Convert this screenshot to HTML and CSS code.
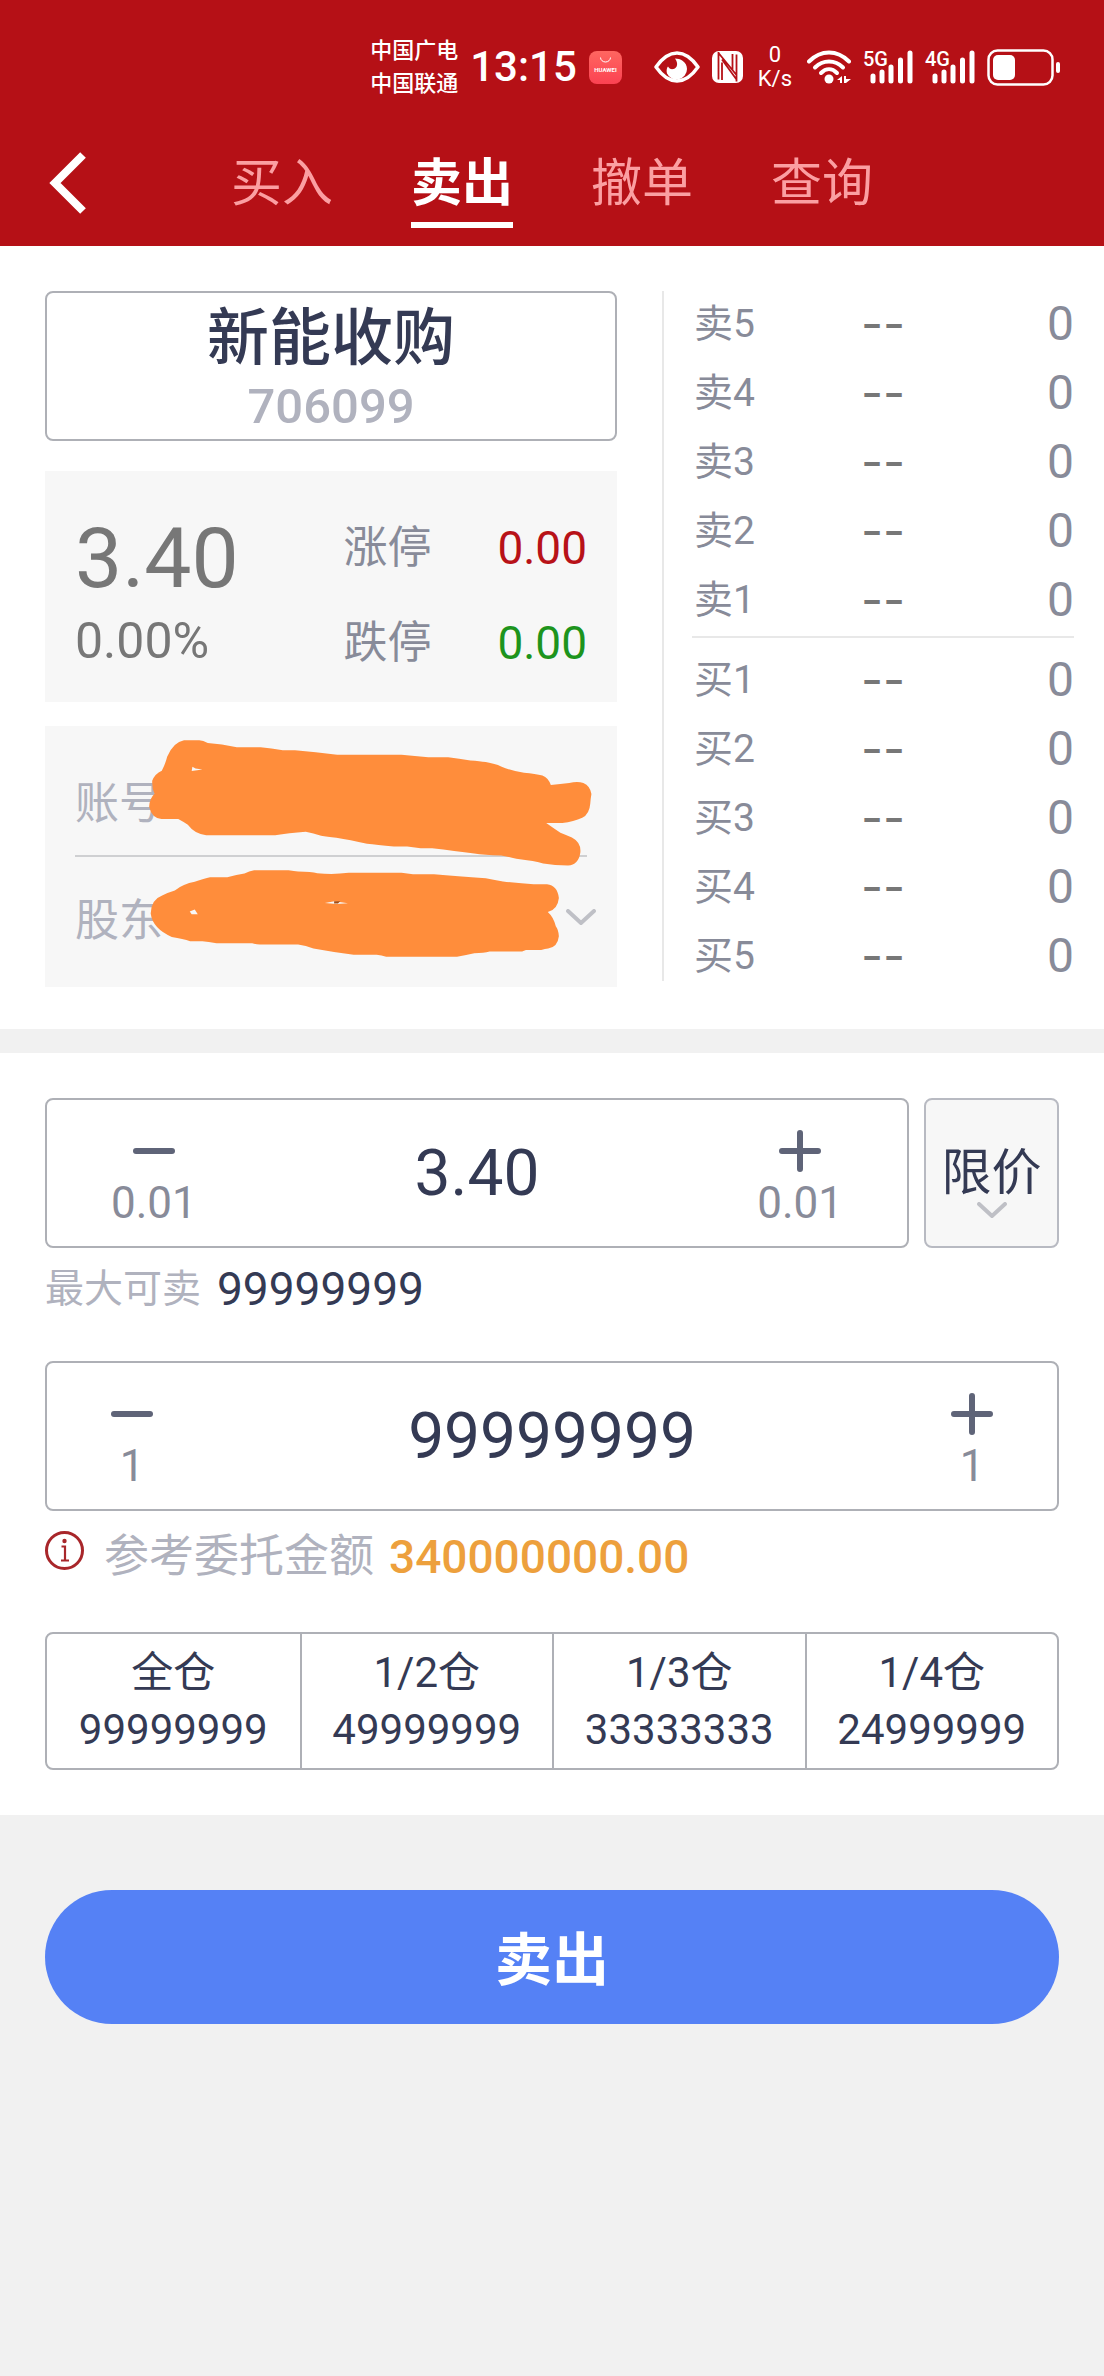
FILE: index.html
```html
<!DOCTYPE html>
<html lang="zh-CN">
<head>
    <meta charset="UTF-8">
    <meta name="viewport" content="width=device-width, initial-scale=1">
    <title>卖出</title>
    <link rel="stylesheet" href="styles.css">
</head>
<body>
    <header class="header">
        <div class="status">
            <div class="carrier">中国广电<br>中国联通</div>
            <div class="clock">13:15</div>
            <svg class="app-icon" width="33" height="33" viewBox="0 0 33 33">
                <defs>
                    <linearGradient id="appBg" x1="0" y1="0" x2="0" y2="1">
                        <stop offset="0" stop-color="#ff6660"/>
                        <stop offset="1" stop-color="#fb4252"/>
                    </linearGradient>
                </defs>
                <rect width="33" height="33" rx="8" fill="url(#appBg)"/>
                <path d="M11.500 6.500a5 4.500 0 0 0 10 0" fill="none" stroke="#fff" stroke-width="1"/>
                <text x="16.500" y="21" text-anchor="middle" font-size="6" font-weight="700" fill="#fff">HUAWEI</text>
            </svg>
            <svg width="46" height="32" viewBox="0 0 46 32">
                <path d="M2 16C9 6 16 2 23 2s14 4 21 14C37 26 30 30 23 30S9 26 2 16z" fill="none" stroke="#fff" stroke-width="3.500" stroke-linejoin="round"/>
                <path d="M21 7.500c5 0 12 3 12 10.500a10.500 10.500 0 0 1-20 4.500c-1-3 0-6 1-7 1 2 3 3 5.500 2.500 4-1 5-6 1.500-10.500z" fill="#fff"/>
            </svg>
            <svg width="31" height="32" viewBox="0 0 31 32">
                <rect width="31" height="32" rx="7" fill="#fff"/>
                <path d="M6.500 1v27.500M6.500 2l18 22M10 11.500v17.500M24.500 3.500v27M10 8.500l14.500 20M20.500 3v16" fill="none" stroke="#b51016" stroke-width="1.800"/>
            </svg>
            <div class="net-speed">0<br>K/s</div>
            <svg width="44" height="34" viewBox="0 0 44 34">
                <g fill="none" stroke="#fff" stroke-width="4" stroke-linecap="round">
                    <path d="M2 11.500c12-12 28-12 40 0"/>
                    <path d="M8 17.500c8-8 20-8 28 0"/>
                    <path d="M14 23c5-5 11-5 16 0"/>
                </g>
                <circle cx="22" cy="29" r="4.500" fill="#fff"/>
                <path d="M30 30l5-4v7h-2v-3zM37 26h2v3h5l-5 4h-2z" fill="#fff"/>
            </svg>
            <svg class="signal" width="50" height="34" viewBox="0 0 50 34">
                <text x="0" y="16">5G</text>
                <path d="M10 26v5M19 22v9M28 17v14M37.500 10v21M47 3v28"/>
            </svg>
            <svg class="signal" width="50" height="34" viewBox="0 0 50 34">
                <text x="0" y="16">4G</text>
                <path d="M10 26v5M19 22v9M28 17v14M37.500 10v21M47 3v28"/>
            </svg>
            <svg width="73" height="37" viewBox="0 0 73 37">
                <rect x="1.500" y="1.500" width="64" height="34" rx="9" fill="none" stroke="#fff" stroke-width="2.500"/>
                <rect x="6" y="6" width="22" height="25" rx="5" fill="#fff"/>
                <rect x="69" y="13" width="4" height="11" rx="2" fill="#fff"/>
            </svg>
        </div>
        <nav class="nav">
            <a class="back" href="#" aria-label="返回">
                <svg width="37" height="62" viewBox="0 0 37 62">
                    <path d="M34 3L6 31l28 28" fill="none" stroke="#fff" stroke-width="8"/>
                </svg>
            </a>
            <div class="tabs">
                <a class="tab" href="#">买入</a>
                <a class="tab active" href="#">卖出</a>
                <a class="tab" href="#">撤单</a>
                <a class="tab" href="#">查询</a>
            </div>
        </nav>
    </header>

    <section class="market">
        <div class="stock">
            <button type="button" class="stock-pick">
                <span class="stock-name">新能收购</span>
                <span class="stock-code">706099</span>
            </button>
            <div class="quote">
                <div class="last">
                    <div class="last-price">3.40</div>
                    <div class="last-change">0.00%</div>
                </div>
                <dl class="limits">
                    <dt>涨停</dt>
                    <dd class="up">0.00</dd>
                    <dt>跌停</dt>
                    <dd class="down">0.00</dd>
                </dl>
            </div>
            <div class="account">
                <div class="account-row">账号</div>
                <div class="account-row">
                    <label for="holder">股东</label>
                    <select id="holder"><option></option></select>
                    <svg class="arrow" width="30" height="16" viewBox="0 0 30 16">
                        <path d="M2 2l13 12L28 2"/>
                    </svg>
                </div>
                <!-- marker strokes that hide the account numbers -->
                <svg class="marker" viewBox="39 48 1494 782" preserveAspectRatio="none">
                    <path fill="#ff8d3b" d="M402 91H442Q452 92 464 99Q500 102 540 112H602Q630 115 660 121H692Q745 126 802 134H970Q1005 137 1040 142H1092Q1120 147 1150 151Q1175 153 1190 156Q1215 161 1230 169Q1258 183 1290 188Q1320 191 1338 196Q1354 203 1360 225Q1385 222 1408 219Q1430 213 1445 219Q1463 228 1466 252Q1464 265 1463 280Q1461 312 1442 323Q1420 335 1390 339H1348Q1365 353 1385 368Q1400 375 1415 382Q1440 397 1437 428Q1432 465 1405 466Q1370 466 1340 460Q1320 453 1270 446Q1245 438 1230 436Q1185 435 1160 430Q1110 422 1050 414H1020L985 409H950Q905 404 880 401Q835 389 800 383Q775 380 760 377Q740 370 720 365Q675 369 640 375H460Q430 372 412 344Q400 335 387 327H343Q318 324 311 290Q312 265 325 251Q318 235 319 212Q326 191 344 182Q353 163 358 140Q375 96 402 91Z"/>
                    <path fill="#ff8d3b" d="M585 480H675Q690 483 700 484Q735 485 750 489Q790 494 832 488H970Q985 491 1000 492H1055Q1115 498 1190 504Q1215 510 1235 514Q1280 520 1315 522H1350Q1377 525 1381 563Q1378 598 1352 605Q1367 620 1373 648Q1380 658 1381 678Q1378 710 1353 715Q1345 716 1335 719H1295L1285 724H1200Q1185 729 1160 729Q1140 735 1115 739H930Q918 735 905 733H845Q790 726 740 715Q720 706 700 703H600Q590 703 580 699H487Q465 695 450 693H418Q400 685 370 680Q320 655 315 610Q316 568 345 556Q360 547 378 541Q400 521 430 515Q455 504 470 501H515Q540 493 560 490Q572 483 585 480Z"/>
                    <path fill="#f7f7f7" d="M424 170L432 175L450 178L422 183ZM417 604L430 598L438 612H422ZM770 578L795 573L830 579L800 581Z"/>
                    <path fill="#a34f17" d="M794 573h16l-6 7h-10z"/>
                </svg>
            </div>
        </div>

        <div class="book">
            <table>
                <tbody>
                    <tr><th>卖5</th><td class="price">--</td><td>0</td></tr>
                    <tr><th>卖4</th><td class="price">--</td><td>0</td></tr>
                    <tr><th>卖3</th><td class="price">--</td><td>0</td></tr>
                    <tr><th>卖2</th><td class="price">--</td><td>0</td></tr>
                    <tr><th>卖1</th><td class="price">--</td><td>0</td></tr>
                </tbody>
                <tbody class="buy">
                    <tr><th>买1</th><td class="price">--</td><td>0</td></tr>
                    <tr><th>买2</th><td class="price">--</td><td>0</td></tr>
                    <tr><th>买3</th><td class="price">--</td><td>0</td></tr>
                    <tr><th>买4</th><td class="price">--</td><td>0</td></tr>
                    <tr><th>买5</th><td class="price">--</td><td>0</td></tr>
                </tbody>
            </table>
        </div>
    </section>

    <form class="order">
        <div class="order-panel">
            <div class="price-row">
                <div class="stepper">
                    <button type="button" class="step" aria-label="减 0.01">
                        <svg width="42" height="42" viewBox="0 0 42 42"><path d="M3 21h36"/></svg>
                        <span>0.01</span>
                    </button>
                    <input type="text" value="3.40" aria-label="委托价格" inputmode="decimal">
                    <button type="button" class="step" aria-label="加 0.01">
                        <svg width="42" height="42" viewBox="0 0 42 42"><path d="M3 21h36M21 3v36"/></svg>
                        <span>0.01</span>
                    </button>
                </div>
                <div class="mode">
                    <select aria-label="委托方式"><option>限价</option></select>
                    <svg class="arrow" width="30" height="16" viewBox="0 0 30 16">
                        <path d="M2 2l13 12L28 2"/>
                    </svg>
                </div>
            </div>
            <div class="max-sell">最大可卖 <span>99999999</span></div>

            <div class="stepper">
                <button type="button" class="step" aria-label="减 1">
                    <svg width="42" height="42" viewBox="0 0 42 42"><path d="M3 21h36"/></svg>
                    <span>1</span>
                </button>
                <input type="text" value="99999999" aria-label="委托数量" inputmode="numeric">
                <button type="button" class="step" aria-label="加 1">
                    <svg width="42" height="42" viewBox="0 0 42 42"><path d="M3 21h36M21 3v36"/></svg>
                    <span>1</span>
                </button>
            </div>
            <div class="amount">
                <svg width="39" height="39" viewBox="0 0 39 39">
                    <circle cx="19.500" cy="19.500" r="18" fill="none" stroke="#a8262a" stroke-width="3"/>
                    <circle cx="19.500" cy="10" r="2.200" fill="#a8262a"/>
                    <path d="M16.500 15.500h3.500v14M16 29.500h8" fill="none" stroke="#a8262a" stroke-width="2.200"/>
                </svg>
                <span>参考委托金额</span>
                <span class="amount-value">340000000.00</span>
            </div>

            <div class="ratios">
                <button type="button">全仓<br>99999999</button>
                <button type="button">1/2仓<br>49999999</button>
                <button type="button">1/3仓<br>33333333</button>
                <button type="button">1/4仓<br>24999999</button>
            </div>
        </div>
        <button type="submit" class="submit">卖出</button>
    </form>
</body>
</html>
```
FILE: styles.css
```css
* {
    box-sizing: border-box;
}
body {
    margin: 0;
    background: #f1f1f1;
    font-family: Roboto, "Noto Sans CJK SC", sans-serif;
    color: #343a54;
}
button, input, select {
    font-family: inherit;
    color: inherit;
    border: none;
    background: none;
    margin: 0;
    padding: 0;
}
button {
    cursor: pointer;
}
select {
    appearance: none;
}
a {
    text-decoration: none;
}
svg {
    display: block;
    flex-shrink: 0;
}

/* header */
.header {
    background: #b51016;
    color: #fff;
}
.status {
    height: 134px;
    padding-right: 44px;
    display: flex;
    align-items: center;
    justify-content: flex-end;
    gap: 12px;
}
.carrier {
    font-size: 22px;
    line-height: 33px;
    font-weight: 500;
}
.clock {
    font-size: 42px;
    line-height: 48px;
    font-weight: 500;
}
.app-icon {
    margin-right: 20px;
}
.net-speed {
    margin: 0 3px;
    font-size: 22px;
    line-height: 24px;
    text-align: center;
}
.signal {
    overflow: visible;
}
.signal text {
    font-size: 20px;
    font-weight: 500;
    fill: #fff;
}
.signal path {
    stroke: #fff;
    stroke-width: 5;
    stroke-linecap: round;
}
.nav {
    display: flex;
    padding: 15px 49px 18px;
}
.back {
    width: 182px;
    padding-top: 3px;
}
.tabs {
    display: flex;
    gap: 78px;
}
.tab {
    color: #fb9fa2;
    font-size: 51px;
    line-height: 70px;
    padding-bottom: 3px;
    border-bottom: 6px solid transparent;
}
.tab.active {
    color: #fff;
    font-weight: bold;
    border-bottom-color: #fff;
}

/* stock and order book */
.market {
    display: grid;
    grid-template-columns: 25fr 18fr;
    gap: 45px;
    align-items: start;
    padding: 45px 30px 42px 45px;
    margin-bottom: 24px;
    background: #fff;
}
.stock-pick {
    display: flex;
    flex-direction: column;
    align-items: center;
    justify-content: center;
    width: 100%;
    height: 150px;
    margin-bottom: 30px;
    padding-top: 6px;
    border: 2px solid #aeb0b6;
    border-radius: 8px;
}
.stock-name {
    font-size: 62px;
    line-height: 76px;
    font-weight: 500;
}
.stock-code {
    font-size: 49px;
    line-height: 60px;
    font-weight: 500;
    color: #b0b2be;
}
.quote {
    display: flex;
    justify-content: space-between;
    height: 231px;
    margin-bottom: 24px;
    padding: 42px 30px;
    background: #f7f7f7;
    color: #777;
}
.last-price {
    font-size: 84px;
    line-height: 92px;
}
.last-change {
    font-size: 50px;
    line-height: 72px;
}
.limits {
    display: grid;
    grid-template-columns: auto auto;
    grid-auto-rows: 95px;
    column-gap: 66px;
    margin: 0;
    font-size: 44px;
    line-height: 70px;
    color: #888b99;
}
.limits dd {
    margin: 0;
    font-size: 46px;
    text-align: right;
}
.limits .up {
    color: #b81218;
}
.limits .down {
    color: #1d941d;
}
.account {
    position: relative;
    padding: 15px 30px 14px;
    background: #f7f7f7;
    color: #b0b2be;
    font-size: 44px;
}
.account-row {
    display: flex;
    align-items: center;
    height: 116px;
    padding-top: 3px;
}
.account-row:first-child {
    border-bottom: 2px solid #cfd0d2;
}
.account-row select {
    flex: 1;
    height: 60px;
}
.account-row .arrow {
    margin-right: -9px;
}
.arrow path {
    fill: none;
    stroke: #bfc0c6;
    stroke-width: 4;
    stroke-linecap: round;
}
.marker {
    position: absolute;
    top: 0;
    left: 0;
    width: 100%;
    height: 100%;
    pointer-events: none;
}
.book {
    border-left: 2px solid #e8e8e8;
    padding-left: 28px;
}
.book table {
    width: 100%;
    table-layout: fixed;
    border-collapse: collapse;
    color: #888b99;
}
.book th, .book td {
    padding: 8px 0 11px;
    line-height: 50px;
}
.book th {
    padding-left: 2px;
    font-size: 39px;
    font-weight: normal;
    text-align: left;
}
.book td {
    font-size: 48px;
    text-align: right;
}
.book .price {
    font-family: Inter, sans-serif;
    color: #777;
    text-align: center;
}
.book .buy {
    border-top: 2px solid #e8e8e8;
}
.book .buy tr:first-child > * {
    padding-top: 17px;
}
.book .buy tr:last-child > * {
    padding-bottom: 0;
}

/* order form */
.order {
    display: flex;
    flex-direction: column;
}
.order-panel {
    padding: 45px;
    background: #fff;
}
.price-row {
    display: flex;
    gap: 15px;
}
.stepper {
    display: flex;
    flex: 1;
    min-width: 0;
    height: 150px;
    border: 2px solid #aeb0b6;
    border-radius: 8px;
}
.stepper input {
    flex: 1;
    width: 0;
    min-width: 0;
    font-size: 64px;
    text-align: center;
}
.step {
    display: flex;
    flex-direction: column;
    align-items: center;
    justify-content: center;
    gap: 5px;
    padding: 12px 64px 0;
    font-size: 44px;
    line-height: 52px;
    color: #888b99;
}
.step path {
    stroke: #5f6478;
    stroke-width: 6;
    stroke-linecap: round;
}
.mode {
    position: relative;
    flex-shrink: 0;
    width: 135px;
    border: 2px solid #b8bac2;
    border-radius: 8px;
    background: #f7f7f7;
}
.mode select {
    width: 100%;
    height: 100%;
    font-size: 50px;
    text-align: center;
    text-align-last: center;
}
.mode .arrow {
    position: absolute;
    left: 50%;
    bottom: 28px;
    margin-left: -15px;
    pointer-events: none;
}
.max-sell {
    display: flex;
    gap: 16px;
    margin: 12px 0 43px;
    font-size: 39px;
    line-height: 58px;
    color: #b0b2be;
}
.max-sell span {
    font-size: 46px;
    color: #343a54;
}
.amount {
    display: flex;
    margin: 16px 0 45px;
    font-size: 45px;
    line-height: 60px;
    color: #b0b2be;
}
.amount svg {
    margin: 4px 20px 0 0;
}
.amount-value {
    margin-left: 15px;
    font-size: 46px;
    font-weight: 500;
    color: #eda03c;
}
.ratios {
    display: grid;
    grid-template-columns: repeat(4, 1fr);
    height: 138px;
    border: 2px solid #aeb0b6;
    border-radius: 8px;
}
.ratios button {
    font-size: 42px;
    line-height: 57px;
}
.ratios button + button {
    border-left: 2px solid #aeb0b6;
}
.submit {
    height: 134px;
    margin: 75px 45px;
    padding-bottom: 4px;
    border-radius: 67px;
    background: #5581f5;
    color: #fff;
    font-size: 57px;
    font-weight: bold;
}
```
